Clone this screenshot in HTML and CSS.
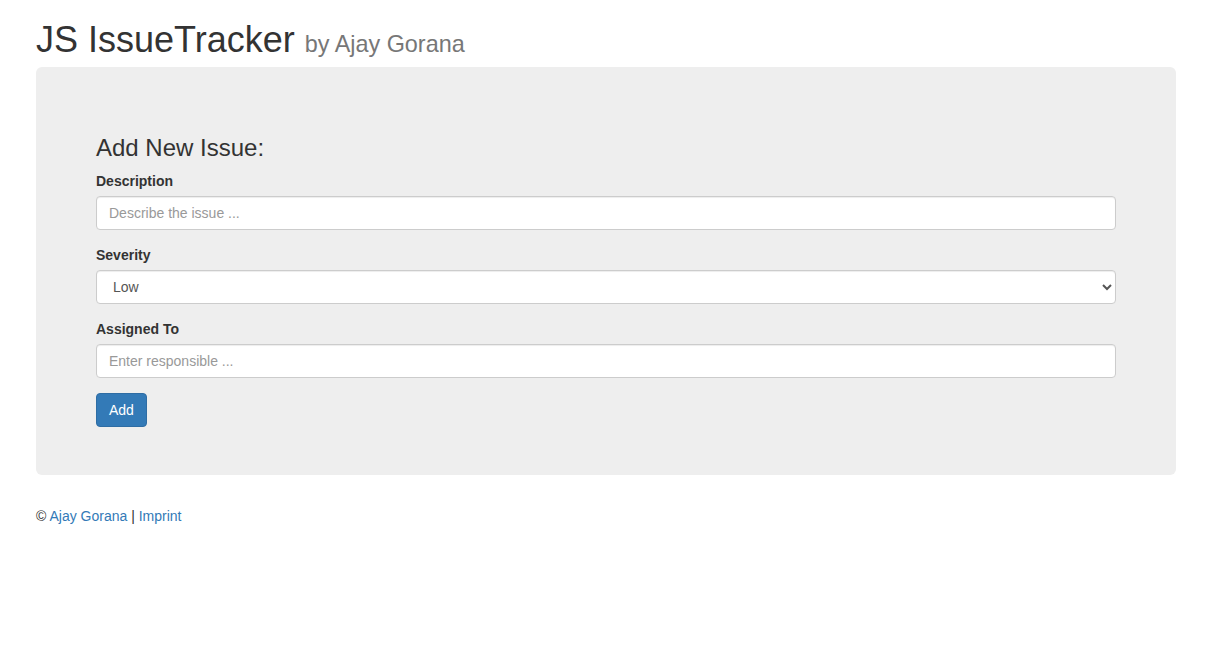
FILE: index.html
```html
<!DOCTYPE html>
<html lang="en">
<head>
<meta charset="utf-8">
<title>JS IssueTracker</title>
<link rel="stylesheet" href="styles.css">
</head>
<body>
<div class="container">
  <h1 class="title">JS IssueTracker <small>by Ajay Gorana</small></h1>
  <div class="jumbotron">
    <h3 class="form-title">Add New Issue:</h3>
    <form class="issue-form">
      <div class="form-group">
        <label for="desc">Description</label>
        <input id="desc" class="form-control" type="text" placeholder="Describe the issue ...">
      </div>
      <div class="form-group">
        <label for="sev">Severity</label>
        <select id="sev" class="form-control">
          <option>Low</option>
          <option>Medium</option>
          <option>High</option>
        </select>
      </div>
      <div class="form-group">
        <label for="assign">Assigned To</label>
        <input id="assign" class="form-control" type="text" placeholder="Enter responsible ...">
      </div>
      <button type="button" class="btn btn-primary">Add</button>
    </form>
  </div>
  <div class="footer">
    &copy; <a href="#">Ajay Gorana</a> | <a href="#">Imprint</a>
  </div>
</div>
</body>
</html>
```

FILE: styles.css
```css
* { box-sizing: border-box; }
html, body { margin: 0; padding: 0; background: #fff; }
body {
  font-family: "Liberation Sans", Arial, Helvetica, sans-serif;
  font-size: 14px;
  line-height: 1.42857143;
  color: #333;
}
.container {
  width: 1140px;
  margin-left: 36px;
}
.title {
  font-size: 36px;
  font-weight: 500;
  line-height: 1.1;
  margin: 20px 0 7px;
  color: #333;
}
.title small {
  font-size: 65%;
  font-weight: 400;
  line-height: 1;
  color: #777;
}
.jumbotron {
  background: #eee;
  border-radius: 6px;
  padding: 48px 60px;
  margin-bottom: 31px;
}
.form-title {
  font-size: 24px;
  font-weight: 500;
  line-height: 1.1;
  margin: 20px 0 10px;
}
.form-group { margin-bottom: 15px; }
label {
  display: inline-block;
  max-width: 100%;
  margin-bottom: 5px;
  font-weight: 700;
}
.form-control {
  display: block;
  width: 100%;
  height: 34px;
  padding: 6px 12px;
  font-family: inherit;
  font-size: 14px;
  line-height: 1.42857143;
  color: #555;
  background-color: #fff;
  border: 1px solid #ccc;
  border-radius: 4px;
  box-shadow: inset 0 1px 1px rgba(0,0,0,.075);
  margin: 0;
}
.form-control::placeholder { color: #999; opacity: 1; }
select.form-control { padding: 6px 8px 6px 12px; }
.btn {
  display: inline-block;
  padding: 6px 12px;
  font-family: inherit;
  font-size: 14px;
  line-height: 1.42857143;
  border: 1px solid transparent;
  border-radius: 4px;
  cursor: pointer;
  margin: 0;
}
.btn-primary {
  color: #fff;
  background-color: #337ab7;
  border-color: #2e6da4;
}
.footer { color: #333; }
.footer a { color: #337ab7; text-decoration: none; }
```
